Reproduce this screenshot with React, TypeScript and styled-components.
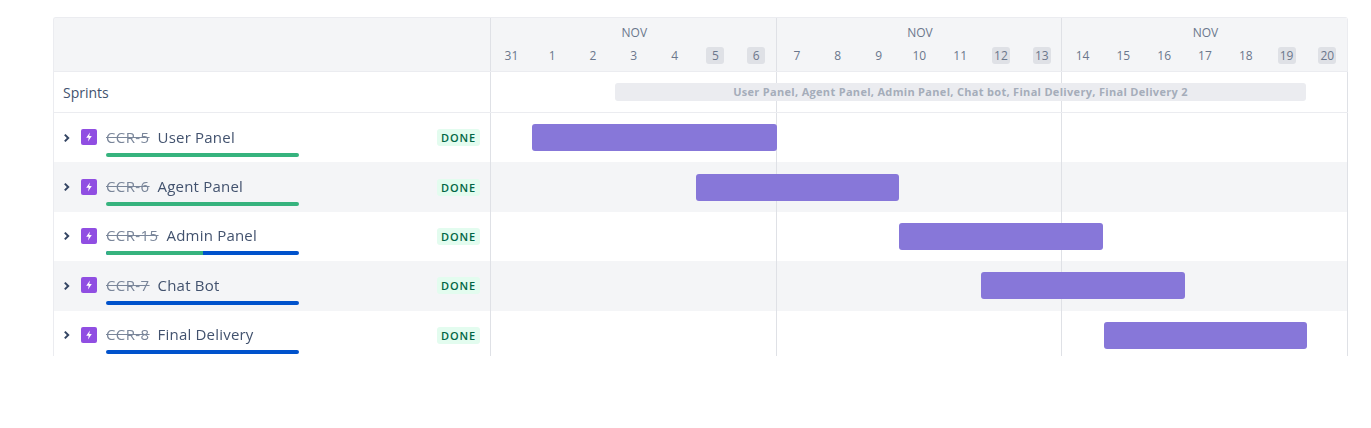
import React from "react";
import styled, { createGlobalStyle } from "styled-components";

const DAY = 40.8;
const MONTH = DAY * 7;

const Global = createGlobalStyle`
  html, body { margin: 0; padding: 0; background: #fff; }
  body { font-family: "Open Sans", "Liberation Sans", sans-serif; color: #42526e; }
`;

const Page = styled.div`
  width: 1371px;
  height: 428px;
  padding: 17px 0 0 53px;
  box-sizing: border-box;
  overflow: hidden;
`;

const Chart = styled.div`
  width: 1295px;
  height: 339px;
  box-sizing: border-box;
  border-left: 1px solid #ebecf0;
  border-top: 1px solid #ebecf0;
  border-radius: 3px 3px 0 0;
  overflow: hidden;
  display: flex;
  flex-direction: column;
  filter: blur(0.3px);
`;

const Row = styled.div<{ $h: number; $shaded?: boolean; $ruled?: boolean }>`
  flex: 0 0 ${(p) => p.$h}px;
  height: ${(p) => p.$h}px;
  box-sizing: border-box;
  display: grid;
  grid-template-columns: 437px 1fr;
  background: ${(p) => (p.$shaded ? "#f4f5f7" : "#fff")};
  border-bottom: ${(p) => (p.$ruled ? "1px solid #ebecf0" : "none")};
`;

const LeftCell = styled.div`
  border-right: 1px solid #dfe1e6;
  display: flex;
  align-items: center;
  min-width: 0;
  box-sizing: border-box;
`;

const Timeline = styled.div`
  display: flex;
  align-items: center;
  min-width: 0;
  background-image:
    linear-gradient(#dfe1e6, #dfe1e6),
    linear-gradient(#dfe1e6, #dfe1e6),
    linear-gradient(#dfe1e6, #dfe1e6);
  background-repeat: no-repeat;
  background-size: 1px 100%;
  background-position: 285px 0, 570px 0, 856px 0;
`;

const HeaderLeft = styled(LeftCell)``;

const HeaderTimeline = styled.div`
  display: grid;
  grid-template-columns: repeat(3, ${MONTH}px);
`;

const MonthBlock = styled.div`
  box-sizing: border-box;
  border-right: 1px solid #dfe1e6;
  display: flex;
  flex-direction: column;
  padding-top: 6px;
  &:last-child { border-right: 1px solid #ebecf0; }
`;

const MonthName = styled.div`
  text-align: center;
  font-size: 12px;
  line-height: 17px;
  height: 17px;
  padding-left: 2px;
  color: #6b778c;
`;

const Days = styled.div`
  display: grid;
  grid-template-columns: repeat(7, ${DAY}px);
  margin-top: 6px;
  justify-items: center;
`;

const Day = styled.div<{ $weekend?: boolean }>`
  width: 18px;
  height: 17px;
  line-height: 17px;
  text-align: center;
  font-size: 12px;
  color: #6b778c;
  border-radius: 3px;
  background: ${(p) => (p.$weekend ? "#dfe1e6" : "transparent")};
`;

const SprintLabel = styled.div`
  padding-left: 9px;
  padding-top: 1px;
  font-size: 14px;
  color: #42526e;
`;

const SprintBar = styled.div`
  height: 18px;
  line-height: 18px;
  background: #ebecf0;
  border-radius: 3px;
  font-size: 11px;
  font-weight: 700;
  letter-spacing: 0.31px;
  color: #a5adba;
  text-align: center;
  white-space: nowrap;
`;

const Expand = styled.span`
  display: flex;
  width: 10px;
  margin-left: 8px;
  margin-right: 9px;
  color: #344563;
`;

const TypeIcon = styled.span`
  width: 16px;
  height: 16px;
  border-radius: 2px;
  background: #904ee2;
  display: flex;
  align-items: center;
  justify-content: center;
  flex: none;
  margin-bottom: 1px;
`;

const Task = styled.div`
  position: relative;
  margin-left: 9px;
  width: 193px;
  height: 100%;
  flex: none;
  display: flex;
  align-items: center;
  padding-bottom: 2px;
  box-sizing: border-box;
`;

const TaskKey = styled.span`
  font-size: 15px;
  letter-spacing: 0.4px;
  color: #7a869a;
  text-decoration: line-through;
  margin-right: 8px;
  white-space: nowrap;
`;

const TaskName = styled.span`
  font-size: 15px;
  letter-spacing: 0.2px;
  color: #42526e;
  white-space: nowrap;
`;

const Progress = styled.div`
  position: absolute;
  left: 0;
  right: 0;
  top: 39.5px;
  height: 4px;
  border-radius: 2px;
  overflow: hidden;
  display: flex;
  background: #0052cc;
`;

const ProgressDone = styled.div`
  background: #36b37e;
  height: 100%;
`;

const Status = styled.span`
  margin-left: auto;
  margin-right: 10px;
  height: 17px;
  line-height: 17px;
  padding: 0 4px;
  border-radius: 3px;
  background: #e3fcef;
  color: #006644;
  font-size: 11px;
  font-weight: 600;
  letter-spacing: 0.9px;
`;

const Bar = styled.div`
  height: 27px;
  background: #8777d9;
  border-radius: 3px;
  flex: none;
`;

const Bolt = () => (
  <svg width="12" height="12" viewBox="0 0 12 12">
    <path d="M7 1.5 3.2 6.8h2.5L5 10.5l3.8-5.4H6.2L7 1.5Z" fill="#fff" />
  </svg>
);

const Chevron = () => (
  <svg width="10" height="10" viewBox="0 0 10 10" fill="none">
    <path d="M2.8 1.6 6.2 5 2.8 8.4" stroke="currentColor" strokeWidth="2" />
  </svg>
);

const weeks = [
  [31, 1, 2, 3, 4, 5, 6],
  [7, 8, 9, 10, 11, 12, 13],
  [14, 15, 16, 17, 18, 19, 20],
];

const tasks = [
  { key: "CCR-5", name: "User Panel", done: 100, start: 41, width: 245 },
  { key: "CCR-6", name: "Agent Panel", done: 100, start: 205, width: 203 },
  { key: "CCR-15", name: "Admin Panel", done: 50, start: 408, width: 204 },
  { key: "CCR-7", name: "Chat Bot", done: 0, start: 490, width: 204 },
  { key: "CCR-8", name: "Final Delivery", done: 0, start: 613, width: 203 },
];

export default function App() {
  return (
    <Page>
      <Global />
      <Chart>
        <Row $h={54} $shaded $ruled>
          <HeaderLeft />
          <HeaderTimeline>
            {weeks.map((week, i) => (
              <MonthBlock key={i}>
                <MonthName>NOV</MonthName>
                <Days>
                  {week.map((d, j) => (
                    <Day key={d} $weekend={j >= 5}>
                      {d}
                    </Day>
                  ))}
                </Days>
              </MonthBlock>
            ))}
          </HeaderTimeline>
        </Row>
        <Row $h={41} $ruled>
          <LeftCell>
            <SprintLabel>Sprints</SprintLabel>
          </LeftCell>
          <Timeline>
            <SprintBar style={{ marginLeft: 124, width: 691 }}>
              User Panel, Agent Panel, Admin Panel, Chat bot, Final Delivery, Final Delivery 2
            </SprintBar>
          </Timeline>
        </Row>
        {tasks.map((t, i) => (
          <Row key={t.key} $h={49.4} $shaded={i % 2 === 1}>
            <LeftCell>
              <Expand>
                <Chevron />
              </Expand>
              <TypeIcon>
                <Bolt />
              </TypeIcon>
              <Task>
                <TaskKey>{t.key}</TaskKey>
                <TaskName>{t.name}</TaskName>
                <Progress>
                  <ProgressDone style={{ width: `${t.done}%` }} />
                </Progress>
              </Task>
              <Status>DONE</Status>
            </LeftCell>
            <Timeline>
              <Bar style={{ marginLeft: t.start, width: t.width }} />
            </Timeline>
          </Row>
        ))}
      </Chart>
    </Page>
  );
}
